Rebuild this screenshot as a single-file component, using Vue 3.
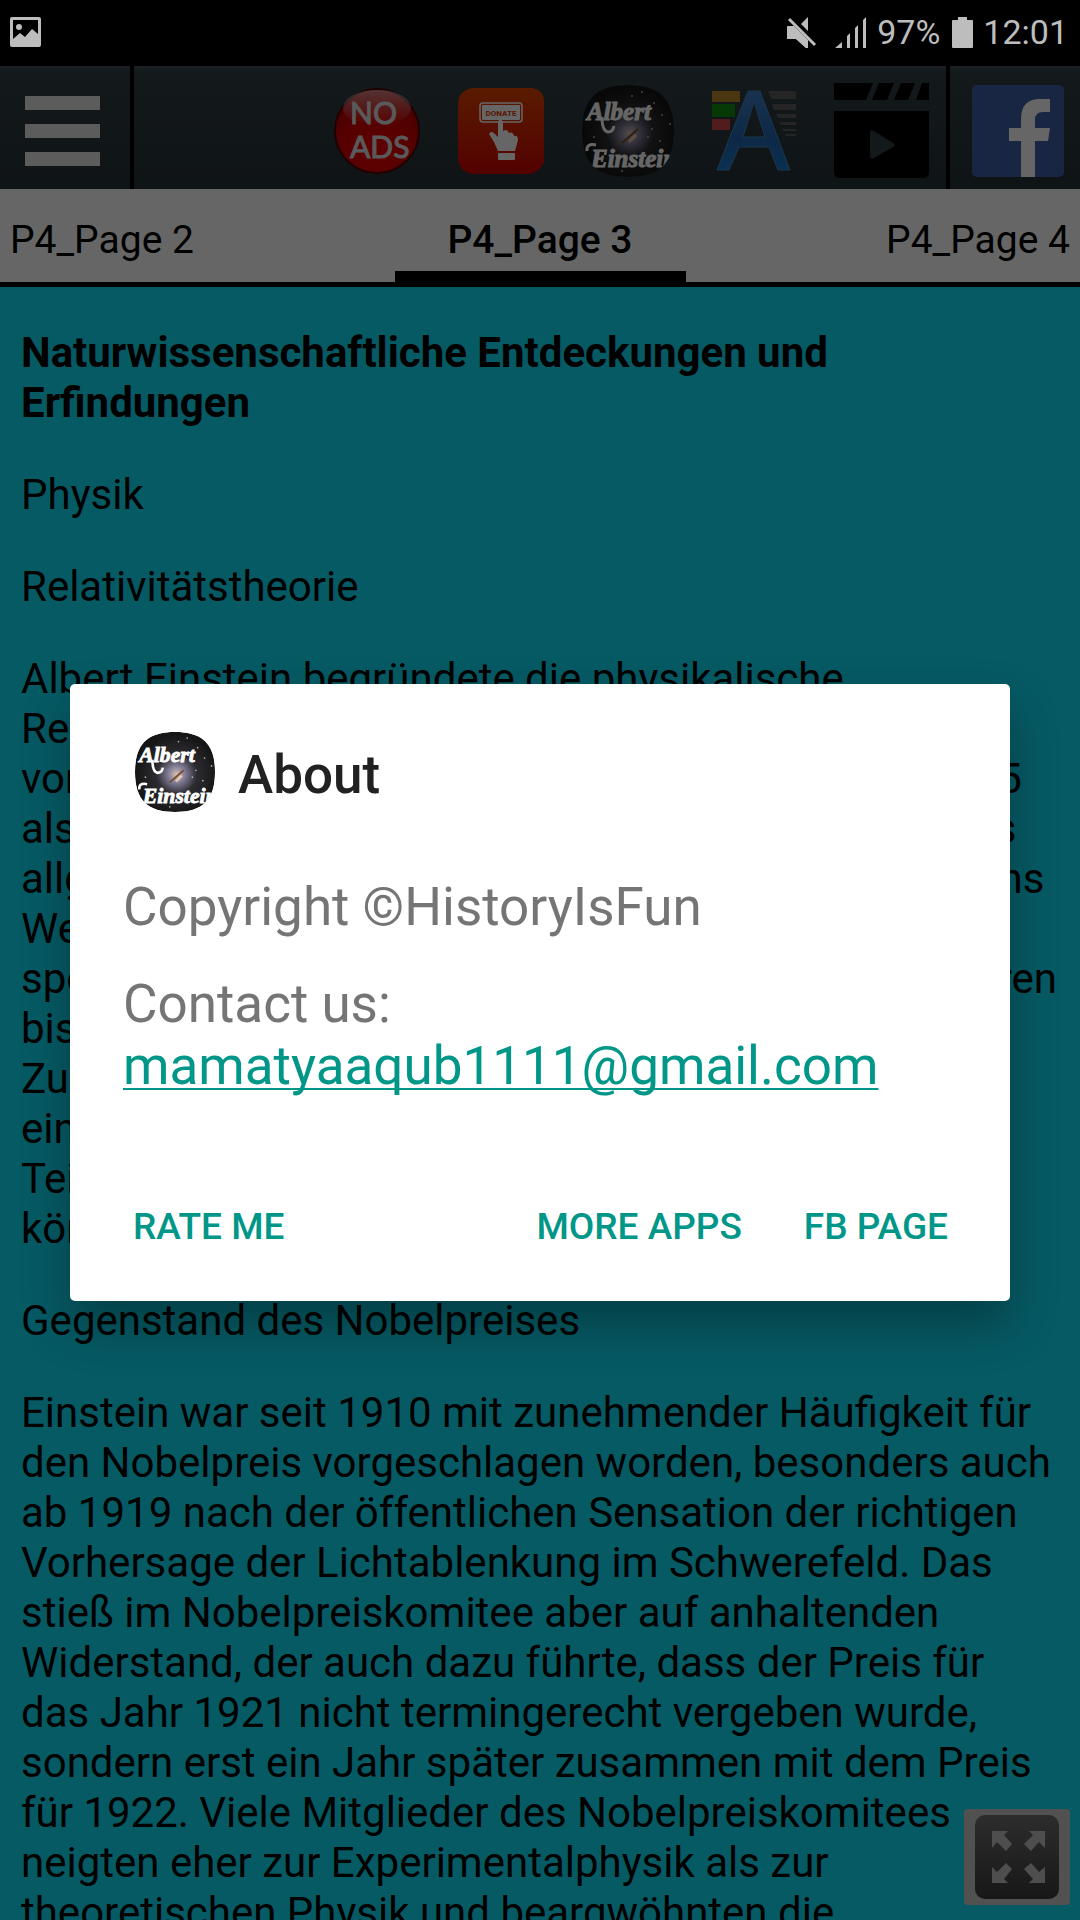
<template>
  <div class="screen">
    <header class="status">
      <svg class="status-photo" viewBox="0 0 31 30" width="31" height="30">
        <path fill-rule="evenodd" d="M2 0H29Q31 0 31 2V28Q31 30 29 30H2Q0 30 0 28V2Q0 0 2 0ZM3 3V22L10 16L15 20L22 12L28 17V3Z" />
        <circle cx="9" cy="10" r="3" />
      </svg>
      <svg viewBox="0 0 30 31" width="30" height="31">
        <path d="M14 7L21 0V14Z" />
        <path d="M1 9H8L21 21V31H19L9 22H1Q0 22 0 21V10Z" />
        <path d="M2 2L28 28" stroke="#000" stroke-width="6" />
        <path d="M1 9H7L21 23V31H19L9 22H1Q0 22 0 21V10Z" />
        <path d="M2 2L28 28" stroke="#bdbdbd" stroke-width="3" />
      </svg>
      <svg class="status-signal" viewBox="0 0 32 31" width="32" height="31">
        <path d="M0 31L7 25V31ZM12 31V19L15 16V31ZM20 31V11L23 8V31ZM28 31V3L31 0V31Z" />
      </svg>
      <span>97%</span>
      <svg class="status-battery" viewBox="0 0 21 31" width="21" height="31">
        <path d="M6 0H15V3H20Q21 3 21 4V30Q21 31 20 31H1Q0 31 0 30V4Q0 3 1 3H6Z" />
      </svg>
      <span>12:01</span>
    </header>

    <nav class="toolbar">
      <button class="menu" aria-label="Menu">
        <i></i><i></i><i></i>
      </button>
      <div class="tools">
        <button aria-label="No ads">
          <svg viewBox="0 0 86 86" width="86" height="86">
            <defs>
              <radialGradient id="red" cx="50%" cy="75%" r="75%">
                <stop offset="0" stop-color="#f00000" />
                <stop offset="0.6" stop-color="#d40000" />
                <stop offset="1" stop-color="#a80000" />
              </radialGradient>
              <linearGradient id="gloss" x1="0" y1="0" x2="0" y2="1">
                <stop offset="0" stop-color="#fff" stop-opacity="0.5" />
                <stop offset="1" stop-color="#fff" stop-opacity="0" />
              </linearGradient>
            </defs>
            <circle cx="43" cy="43" r="42" fill="url(#red)" stroke="#500000" stroke-width="2" />
            <ellipse cx="43" cy="20" rx="34" ry="18" fill="url(#gloss)" />
            <g class="ads-text">
              <text x="16" y="36">NO</text>
              <text x="16" y="70">ADS</text>
            </g>
          </svg>
        </button>
        <button aria-label="Donate">
          <svg viewBox="0 0 86 86" width="86" height="86">
            <defs>
              <linearGradient id="orange" x1="0" y1="0" x2="0" y2="1">
                <stop offset="0" stop-color="#e04400" />
                <stop offset="1" stop-color="#d00400" />
              </linearGradient>
            </defs>
            <path fill="url(#orange)" d="M14 0H74Q86 2 86 14V74Q82 84 72 86H14Q2 84 0 72V14Q2 2 14 0Z" />
            <rect x="22" y="15" width="42" height="19" rx="3" fill="none" stroke="#fff" stroke-width="1.5" />
            <rect x="24" y="17" width="38" height="15" rx="1" fill="#fff" />
            <text x="43" y="28" class="donate-text">DONATE</text>
            <path fill="#fff" d="M40 34Q42 28 45 34V43Q49 40 51 45Q55 43 56 48Q60 47 60 52L57 63H40L36 54L31 46Q33 42 37 46L40 49Z" />
            <rect x="40" y="65" width="17" height="7" rx="1" fill="#fff" />
          </svg>
        </button>
        <button aria-label="Albert Einstein">
          <svg viewBox="0 0 92 92" width="92" height="92">
            <defs>
              <radialGradient id="galaxy" cx="52%" cy="53%" r="50%">
                <stop offset="0" stop-color="#d8c0b4" />
                <stop offset="0.2" stop-color="#83809a" />
                <stop offset="0.5" stop-color="#2d2b30" />
                <stop offset="1" stop-color="#161617" />
              </radialGradient>
              <clipPath id="squircle"><path :d="squircle" /></clipPath>
              <symbol id="einstein" viewBox="0 0 92 92">
                <g clip-path="url(#squircle)">
                  <path :d="squircle" fill="url(#galaxy)" />
                  <path d="M40 58L56 44" stroke="#7a4a30" stroke-width="2" />
                  <path d="M47 57L54 50" stroke="#ffd9b8" stroke-width="3" opacity="0.7" />
                  <circle v-for="(s, i) in stars" :key="i" :cx="s[0]" :cy="s[1]" r="1" fill="#aaa" />
                  <path d="M20 32Q20 46 26 47Q31 47 32 41" fill="none" stroke="#fff" stroke-width="3" />
                  <g class="logo-text">
                    <text x="5" y="35">Albert</text>
                    <text x="9" y="82">Einstein</text>
                  </g>
                  <path d="M5 66Q4 58 14 60" fill="none" stroke="#fff" stroke-width="3" />
                </g>
              </symbol>
            </defs>
            <use href="#einstein" />
          </svg>
        </button>
        <button aria-label="Text">
          <svg viewBox="0 0 84 82" width="84" height="82">
            <defs>
              <linearGradient id="blue" x1="0" y1="0" x2="0" y2="1">
                <stop offset="0" stop-color="#3d7ec4" />
                <stop offset="0.6" stop-color="#2266b0" />
                <stop offset="1" stop-color="#1a78c8" />
              </linearGradient>
            </defs>
            <rect x="0" y="1" width="28" height="11" fill="#b8882c" />
            <rect x="0" y="14" width="23" height="13" fill="#109010" />
            <rect x="0" y="29" width="18" height="11" fill="#c84848" />
            <path fill="#5c5c5c" d="M56 1H84V9H59ZM60 14H84V20H62ZM64 24H84V28H66ZM67 32H84V35H69ZM70 39H84V41H72ZM73 44H84V46H74Z" />
            <path fill="url(#blue)" stroke="#4a84bc" fill-rule="evenodd" d="M36 1H48L78 80H66L57 57H27L17 80H5ZM42 12L31 47H53Z" />
          </svg>
        </button>
        <button aria-label="Videos">
          <svg viewBox="0 0 95 95" width="95" height="95">
            <path d="M0 0H39L32 17H0ZM45 0H60L53 17H38ZM67 0H81L74 17H60ZM88 0H95V17H82ZM0 28H95V89Q95 95 89 95H6Q0 95 0 89Z" />
            <path fill="#303c42" d="M36 50Q36 46 40 48L59 60Q62 62 59 64L40 75Q36 77 36 73Z" />
          </svg>
        </button>
      </div>
      <button class="facebook" aria-label="Facebook">
        <svg viewBox="0 0 92 92" width="92" height="92">
          <rect width="92" height="92" rx="5" fill="#3f5fa8" />
          <path fill="#fff" d="M49 92V56H37V43H49V34Q49 14 68 14H78V27H71Q63 27 63 35V43H78L76 56H63V92Z" />
        </svg>
      </button>
    </nav>

    <div class="tabs">
      <button v-for="tab in tabs" :key="tab" :class="{ active: tab === current }" @click="current = tab">
        {{ tab }}
      </button>
    </div>

    <main class="article">
      <h1>Naturwissenschaftliche Entdeckungen und Erfindungen</h1>
      <p>Physik</p>
      <p>Relativitätstheorie</p>
      <p class="lines">{{ theory.join('\n') }}</p>
      <p>Gegenstand des Nobelpreises</p>
      <p class="lines">{{ nobel.join('\n') }}</p>
    </main>

    <button class="fullscreen" aria-label="Fullscreen">
      <svg viewBox="0 0 84 84" width="84" height="84">
        <defs>
          <linearGradient id="dark" x1="0" y1="0" x2="0" y2="1">
            <stop offset="0" stop-color="#707070" />
            <stop offset="1" stop-color="#3c3c3c" />
          </linearGradient>
        </defs>
        <rect width="84" height="84" rx="10" fill="url(#dark)" />
        <path fill="#c4c4c4" d="M17 16H33L29 20L37 29L31 36L22 27L17 33ZM70 16H54L58 20L49 29L56 36L64 27L70 33ZM17 68H33L29 64L37 54L31 48L22 57L17 52ZM70 68H54L58 64L49 54L56 48L64 57L70 52Z" />
      </svg>
    </button>

    <div class="overlay">
      <section class="dialog" role="dialog" aria-labelledby="about">
        <div class="dialog-title">
          <svg viewBox="0 0 92 92" width="80" height="80"><use href="#einstein" /></svg>
          <h2 id="about">About</h2>
        </div>
        <p>Copyright ©HistoryIsFun</p>
        <p class="contact">Contact us: <a href="mailto:mamatyaaqub1111@gmail.com">mamatyaaqub1111@gmail.com</a></p>
        <div class="dialog-actions">
          <button class="rate">RATE ME</button>
          <button>MORE APPS</button>
          <button>FB PAGE</button>
        </div>
      </section>
    </div>
  </div>
</template>

<script setup>
import { ref } from 'vue';

const tabs = ['P4_Page 2', 'P4_Page 3', 'P4_Page 4'];
const current = ref('P4_Page 3');

// Logo
const squircle = 'M46 0C78 0 92 14 92 46C92 78 78 92 46 92C14 92 0 78 0 46C0 14 14 0 46 0Z';
const stars = [[50, 11], [72, 18], [80, 30], [88, 39], [78, 56], [66, 52], [60, 7], [12, 52], [40, 86], [70, 44]];

const theory = [
  'Albert Einstein begründete die physikalische',
  'Relativitätstheorie, die er als eine neue Theorie',
  'von Raum, Zeit und der Gravitation, wie im Jahre 1905',
  'als spezielle Theorie und im Jahre 1916 bald auch als',
  'allgemeine Relativitätstheorie veröffentlichte. Einsteins',
  'Werk veränderte die Physik. Vor allem die',
  'spezielle Relativitätstheorie gehört seit so vielen Jahren',
  'bis heute zu den Grundlagen der Physik.',
  'Zu ihren Folgerungen gehört auch, dass',
  'eine Uhr in Bewegung langsamer geht und',
  'Teilchen keine Lichtgeschwindigkeit erreichen',
  'können.',
];

const nobel = [
  'Einstein war seit 1910 mit zunehmender Häufigkeit für',
  'den Nobelpreis vorgeschlagen worden, besonders auch',
  'ab 1919 nach der öffentlichen Sensation der richtigen',
  'Vorhersage der Lichtablenkung im Schwerefeld. Das',
  'stieß im Nobelpreiskomitee aber auf anhaltenden',
  'Widerstand, der auch dazu führte, dass der Preis für',
  'das Jahr 1921 nicht termingerecht vergeben wurde,',
  'sondern erst ein Jahr später zusammen mit dem Preis',
  'für 1922. Viele Mitglieder des Nobelpreiskomitees',
  'neigten eher zur Experimentalphysik als zur',
  'theoretischen Physik und beargwöhnten die',
];
</script>

<style>
body {
  background: #000;
}
</style>

<style scoped>
.screen {
  position: relative;
  display: flex;
  flex-direction: column;
  height: 100vh;
  overflow: hidden;
  background: #11e1fa;
  font-family: Roboto, sans-serif;
  color: #000;
}

button {
  border: none;
  padding: 0;
  background: none;
  font-family: inherit;
  color: inherit;
  cursor: pointer;
}

svg {
  display: block;
}

.status {
  position: relative;
  z-index: 2;
  flex: none;
  display: flex;
  align-items: center;
  height: 66px;
  padding: 0 12px 2px 10px;
  box-sizing: border-box;
  background: #000;
  color: #bdbdbd;
  fill: #bdbdbd;
  font-size: 34px;
}

.status-photo {
  margin-right: auto;
}

.status-signal {
  margin: 0 10px 0 18px;
}

.status-battery {
  margin: 0 10px 0 12px;
}

.toolbar {
  flex: none;
  display: flex;
  height: 123px;
  background: linear-gradient(#44525a, #323f46 6px, #263238);
}

.menu {
  display: flex;
  flex-direction: column;
  justify-content: center;
  gap: 14px;
  padding: 6px 30px 0 25px;
  border-right: 4px solid #000;
}

.menu i {
  width: 75px;
  height: 14px;
  background: #e6e6e6;
}

.tools {
  flex: 1;
  display: flex;
  align-items: center;
  justify-content: flex-end;
  gap: 38px;
  padding: 6px 17px 0 0;
}

.facebook {
  padding: 6px 16px 0 22px;
  border-left: 4px solid #000;
}

.ads-text {
  font: 30px Lato, sans-serif;
  fill: #e0e0e0;
  stroke: #e0e0e0;
}

.donate-text {
  font: bold 8px Roboto, sans-serif;
  fill: #e03800;
  text-anchor: middle;
}

.logo-text {
  font: italic bold 25px "Liberation Serif", serif;
  fill: #fff;
  stroke: #fff;
}

.tabs {
  flex: none;
  display: grid;
  grid-template-columns: 1fr 291px 1fr;
  height: 93px;
  background: #fff;
  border-bottom: 5px solid #000;
}

.tabs button {
  padding: 9px 10px 0;
  font-size: 39px;
  text-align: left;
}

.tabs button:last-child {
  text-align: right;
}

.tabs .active {
  padding: 20px 0 0;
  border-bottom: 11px solid #000;
  font-weight: 500;
  text-align: center;
}

.article {
  flex: 1;
  min-height: 0;
  padding: 0 21px;
  font-size: 42px;
  line-height: 50px;
}

.article h1,
.article p {
  margin: 0 0 42px;
  font-size: 42px;
}

.article h1 {
  margin-top: 41px;
}

.article .lines {
  white-space: pre;
}

.fullscreen {
  position: absolute;
  right: 10px;
  bottom: 15px;
  padding: 6px 11px;
  border-radius: 4px;
  background: #cbcbcb;
}

.overlay {
  position: absolute;
  inset: 0;
  display: flex;
  align-items: center;
  padding: 64px 70px 0;
  background: rgba(0, 0, 0, 0.6);
}

.dialog {
  flex: 1;
  box-sizing: border-box;
  padding: 48px 53px 34px;
  border-radius: 5px;
  background: #fff;
  box-shadow: 0 24px 48px rgba(0, 0, 0, 0.3);
  color: #757575;
  font-size: 53px;
  line-height: 62px;
}

.dialog-title {
  display: flex;
  align-items: center;
  gap: 23px;
  margin: 0 12px 64px;
}

.dialog h2 {
  margin: 0;
  padding-top: 6px;
  color: #212121;
  font-size: 53px;
  font-weight: 500;
}

.dialog p {
  margin: 0 0 35px;
}

.dialog a {
  display: block;
  color: #009688;
  text-decoration-thickness: 2px;
  text-underline-offset: 4px;
  text-decoration-skip-ink: none;
}

.dialog-actions {
  display: flex;
  gap: 62px;
  margin: 90px 9px 0 10px;
}

.dialog-actions button {
  height: 80px;
  color: #009688;
  font-size: 37px;
  font-weight: 500;
}

.rate {
  margin-right: auto;
}
</style>
